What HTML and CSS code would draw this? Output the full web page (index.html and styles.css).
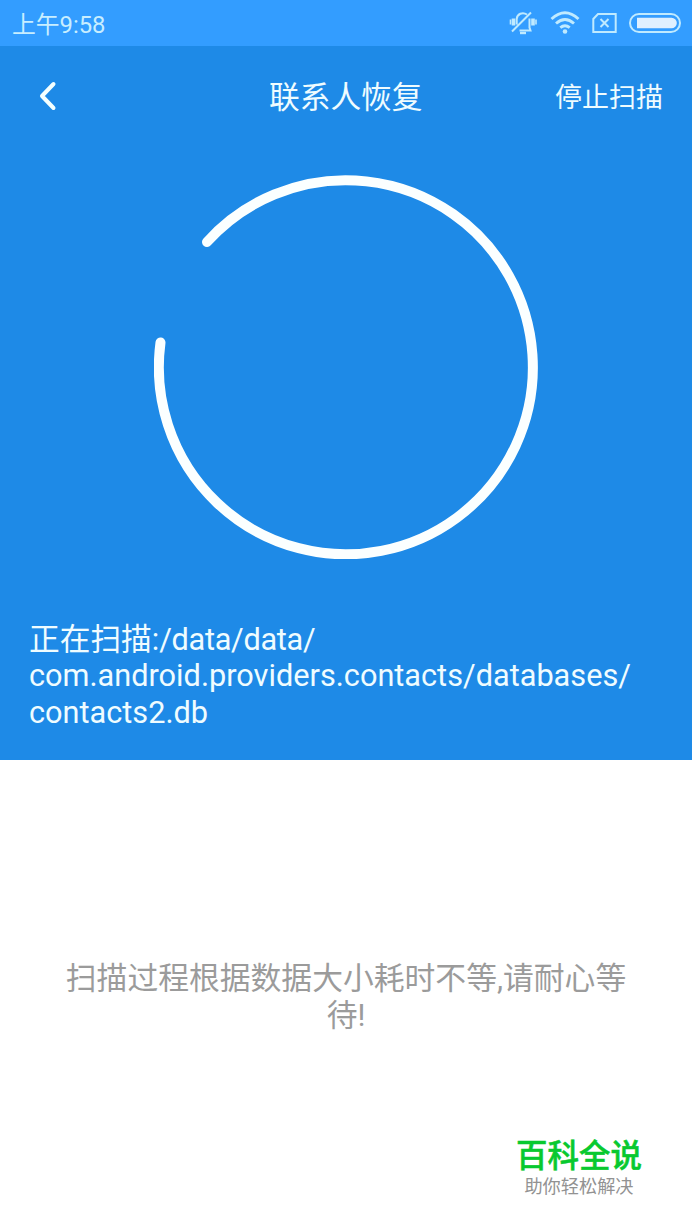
FILE: index.html
```html
<!doctype html>
<html lang="zh-CN">
  <head>
    <meta charset="utf-8">
    <title>联系人恢复</title>
    <link rel="stylesheet" href="styles.css">
  </head>

  <body>

    <div class="status-bar">
      <span class="time">上午9:58</span>
      <div class="status-icons">
        <!--Muted bell-->
        <svg width="30" height="24" viewBox="0 0 30 24" fill="none" stroke="#bfeaff" stroke-width="2">
          <path d="M19 3.500C14.500 .5 9 3 8.700 8V13.500M21.500 7.500V16.500L22.500 19.500H11.500M4 20.500L23 1.500" />
          <path d="M5.500 7.500v7M25 7.500v7" stroke-width="3.600" />
          <path d="M2.500 8.500v5M28 8.500v5" stroke-width="1.600" />
          <path d="M12 22h6" stroke-width="2.400" />
        </svg>
        <!--Wifi-->
        <svg width="30" height="24" viewBox="0 0 30 24" fill="none" stroke="#bfeaff" stroke-width="2.900">
          <path d="M1.500 8Q15 -4.500 28.500 8M6 12.500Q15 4.500 24 12.500M10.300 16.700Q15 12.800 19.700 16.700" />
          <circle cx="15" cy="20.500" r="2.300" fill="#bfeaff" stroke="none" />
        </svg>
        <!--No sim card-->
        <svg width="25" height="20" viewBox="0 0 25 20" fill="none" stroke="#bfeaff" stroke-width="2">
          <path d="M6 1H23.700V19H1.300V6Z" />
          <path d="M8.500 6L16.500 14M16.500 6L8.500 14" />
        </svg>
        <!--Battery-->
        <svg width="52" height="20" viewBox="0 0 52 20">
          <rect x="1" y="1" width="50" height="18" rx="9" fill="none" stroke="#bfeaff" stroke-width="2" />
          <path d="M8 4.700H42.500A5.300 5.300 0 0 1 42.500 15.300H8Z" fill="#dff0ff" />
        </svg>
      </div>
    </div>

    <div class="scan">
      <div class="nav">
        <a class="back" href="#" aria-label="返回">
          <svg width="20" height="32" viewBox="0 0 20 32" fill="none" stroke="#f4ffff" stroke-width="4" stroke-linecap="round" stroke-linejoin="round">
            <path d="M16.500 4L5 16L16.500 28" />
          </svg>
        </a>
        <h1>联系人恢复</h1>
        <a class="stop" href="#">停止扫描</a>
      </div>

      <svg class="ring" width="384" height="384" viewBox="0 0 384 384">
        <path d="M53 67A187 187 0 1 1 6.500 167.500" />
      </svg>

      <p class="path">正在扫描:<span class="root">/data/data/</span><br>com.android.providers.contacts/databases/<br>contacts2.db</p>
    </div>

    <div class="content">
      <p class="notice">扫描过程根据数据大小耗时不等,请耐心等待!</p>
    </div>

    <div class="brand">
      <strong>百科全说</strong>
      <span>助你轻松解决</span>
    </div>

  </body>
</html>
```
FILE: styles.css
```css
body {
  margin:0;
  height:1230px;
  display:flex;
  flex-direction:column;
  overflow:hidden;
  background-color:#fff;
  font-family: Roboto, 'Noto Sans CJK SC', sans-serif;
}

a {
  color:inherit;
  text-decoration:none;
}

/* Status bar */

.status-bar {
  height:46px;
  box-sizing:border-box;
  padding:0 11px 0 12px;
  display:flex;
  justify-content:space-between;
  align-items:center;
  background-color:#339dff;
  color:#c8eeff;
}
.time {
  font-size:23.8px;
  line-height:46px;
  padding-top:3px;
}
.status-icons {
  display:flex;
  align-items:center;
  gap:12px;
}

/* Blue scanning area */

.scan {
  height:714px;
  display:flex;
  flex-direction:column;
  background-color:#1e8ae7;
  color:#effcff;
}
.nav {
  height:100px;
  padding:0 29px 0 37px;
  display:grid;
  grid-template-columns: 1fr 154px 1fr;
  align-items:center;
}
.back {
  display:flex;
}
h1 {
  margin:0 0 0 -4px;
  padding-bottom:4px;
  font-size:30.7px;
  font-weight:400;
  white-space:nowrap;
}
.stop {
  justify-self:end;
  padding-bottom:2px;
  font-size:27px;
}
.ring {
  align-self:center;
  margin-top:29px;
  fill:none;
  stroke:#fbffff;
  stroke-width:10;
  stroke-linecap:round;
}
.path {
  margin:62.5px 29px 0;
  font-size:30.7px;
  line-height:36.7px;
}
.root {
  letter-spacing:-.3px;
}

/* Notice */

.content {
  height:376px;
  padding:201px 60px 0;
  box-sizing:border-box;
}
.notice {
  margin:0;
  font-size:30.8px;
  line-height:36.500px;
  text-align:center;
  color:#9b9b9b;
}

.brand {
  align-self:flex-end;
  margin-right:50px;
  display:flex;
  flex-direction:column;
  align-items:center;
}
.brand strong {
  font-size:31.5px;
  line-height:42px;
  font-weight:500;
  -webkit-text-stroke:.5px #08c92f;
  color:#08c92f;
}
.brand span {
  font-size:18.200px;
  line-height:18px;
  color:#929292;
}
```
